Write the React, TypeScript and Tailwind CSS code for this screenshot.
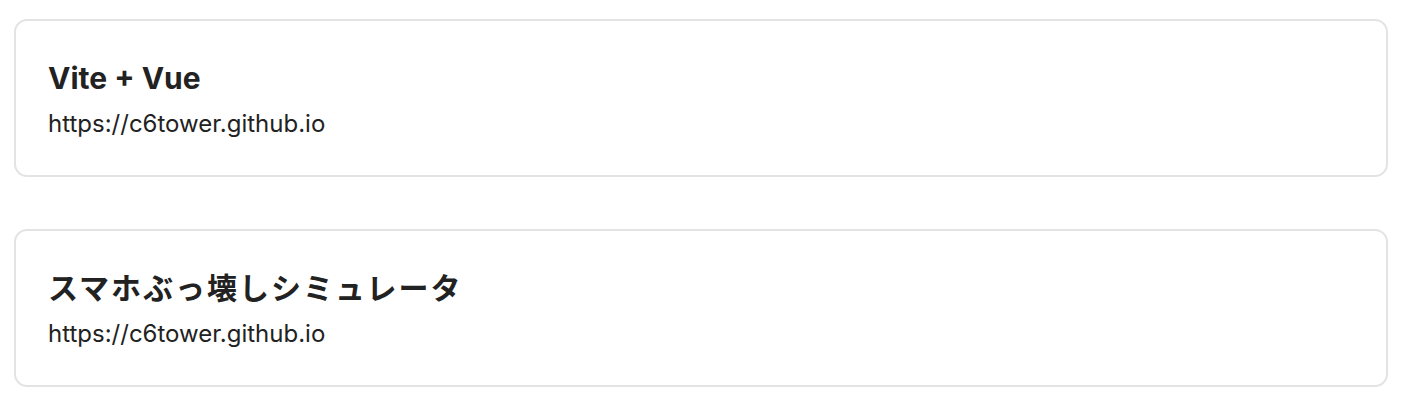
export default function App() {
  const items = [
    { title: "Vite + Vue", url: "https://c6tower.github.io", cjk: false },
    { title: "スマホぶっ壊しシミュレータ", url: "https://c6tower.github.io", cjk: true },
  ];
  return (
    <div
      className="w-[1410px] h-[406px] bg-white pt-[19px] pl-[14px] pr-[22px] flex flex-col gap-[52px]"
      style={{ fontFamily: 'Inter, "Noto Sans CJK JP", sans-serif' }}
    >
      {items.map((it, i) => (
        <div
          key={i}
          className="h-[158px] border-2 border-[#e3e3e3] rounded-[13px] px-[32px] pt-[39px] flex flex-col text-[#222222]"
        >
          <div
            className={
              it.cjk
                ? "text-[30px] leading-[36px] font-bold tracking-[2px]"
                : "text-[30px] leading-[36px] font-bold"
            }
          >
            {it.title}
          </div>
          <div className="text-[24px] leading-[28px] mt-[14px]">{it.url}</div>
        </div>
      ))}
    </div>
  );
}
